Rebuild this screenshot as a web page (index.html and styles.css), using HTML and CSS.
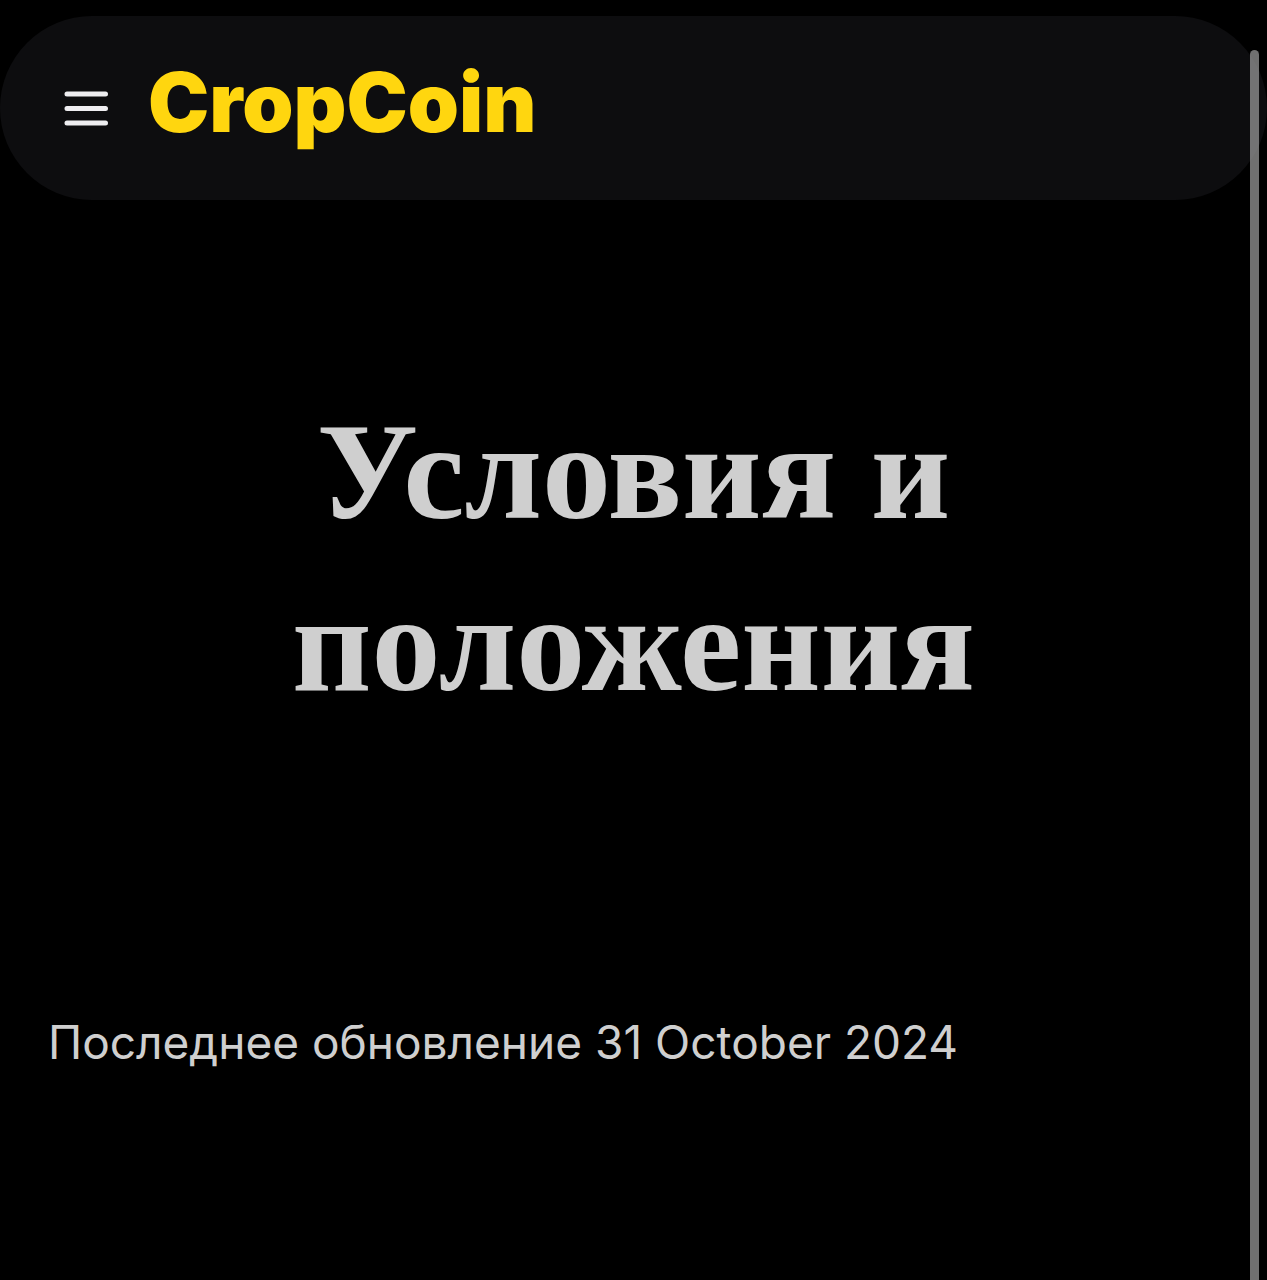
FILE: index.html
```html
<!DOCTYPE html>
<html lang="ru">
<head>
<meta charset="utf-8">
<meta name="viewport" content="width=device-width, initial-scale=1">
<title>CropCoin</title>
<link rel="stylesheet" href="styles.css">
</head>
<body>
<header class="navbar">
	<button type="button" class="menu-btn" aria-label="Меню">
		<svg width="44" height="36" viewBox="0 0 44 36" fill="none" stroke="#eeedf0" stroke-width="5" stroke-linecap="round">
			<path d="M3 4H41.5M3 18.5H41.5M3 33H41.5"/>
		</svg>
	</button>
	<a href="#" class="logo">CropCoin</a>
</header>
<main class="content">
	<h1>Условия и положения</h1>
	<p class="updated">Последнее обновление 31 October 2024</p>
</main>
<div class="scrollbar"></div>
</body>
</html>
```

FILE: styles.css
```css
* {
	box-sizing:border-box;
}
body {
	margin:0;
	padding-top:16px;
	min-height:100vh;
	background:#000;
	color:#cfcfcf;
	font-family:Inter, sans-serif;
	overflow:hidden;
}
.navbar {
	display:flex;
	align-items:center;
	gap:40px;
	padding:37px 64px;
	background:#0d0d0f;
	border-radius:92px;
}
.menu-btn {
	display:flex;
	padding:0;
	border:0;
	background:none;
	cursor:pointer;
}
.logo {
	padding-bottom:10px;
	color:#ffd60f;
	font-size:82px;
	font-weight:900;
	line-height:100px;
	text-decoration:none;
}
.content {
	padding:186px 48px 0;
}
h1 {
	max-width:800px;
	margin:0 auto;
	font-family:"Liberation Serif", serif;
	font-size:138px;
	font-weight:bold;
	line-height:172px;
	text-align:center;
}
.updated {
	margin:276px 0 0;
	font-size:46px;
	line-height:72px;
}
.scrollbar {
	position:fixed;
	top:50px;
	right:8px;
	bottom:-8px;
	width:9px;
	border-radius:5px;
	background:rgba(160, 160, 160, 0.7);
}
```
